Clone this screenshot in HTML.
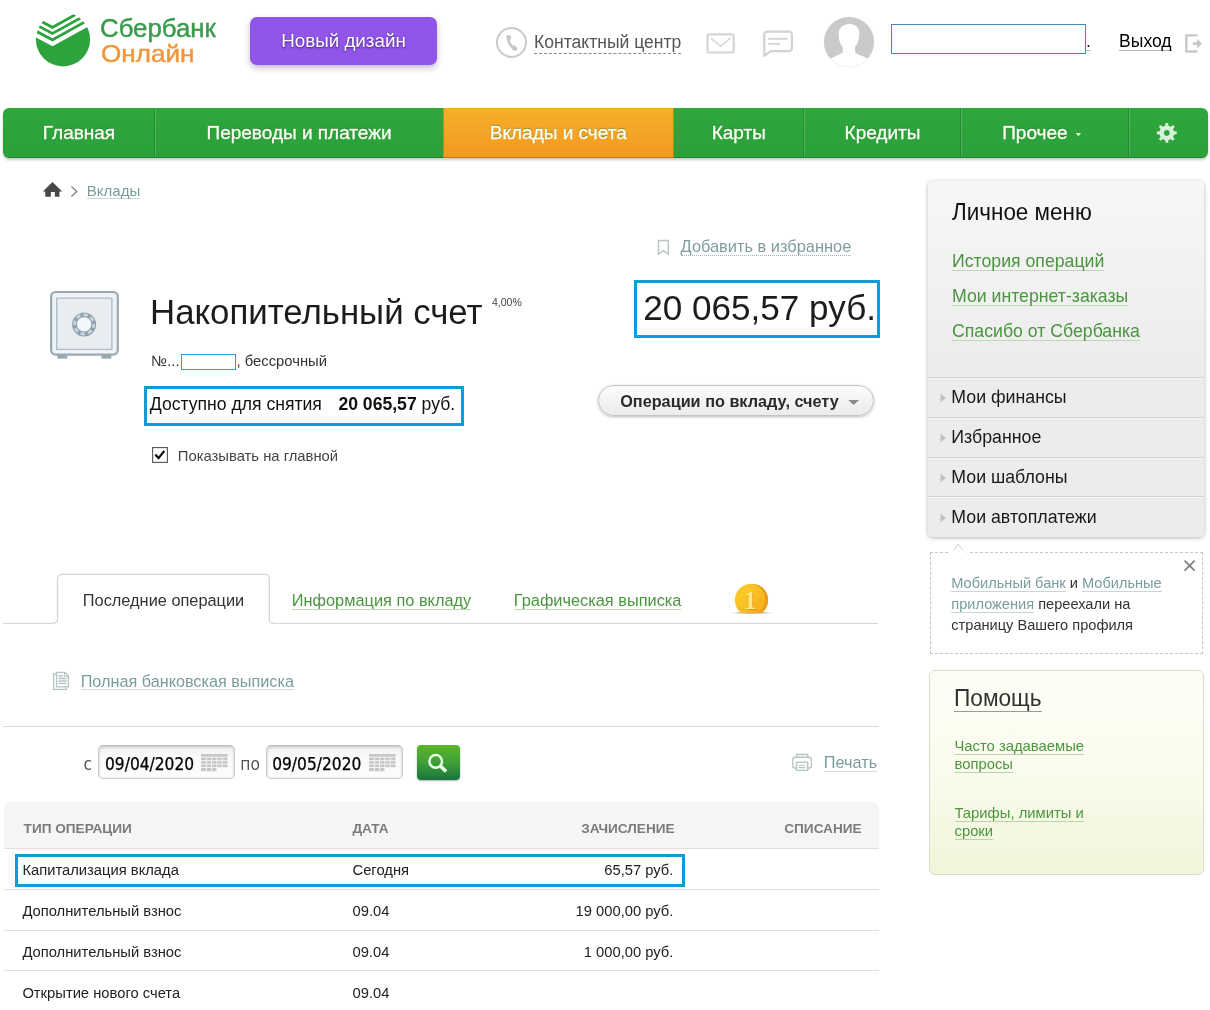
<!DOCTYPE html>
<html lang="ru"><head><meta charset="utf-8"><title>Сбербанк Онлайн</title>
<style>
html,body{margin:0;padding:0;background:#fff;}
body{width:1210px;height:1010px;position:relative;overflow:hidden;font-family:"Liberation Sans", sans-serif;}
.t{position:absolute;white-space:nowrap;}
.b{position:absolute;display:block;}
b{font-weight:bold;}
#pg{position:absolute;left:0;top:0;width:1210px;height:1010px;will-change:transform;}
</style></head>
<body>
<div id="pg">
<svg class="b" style="left:30px;top:5px" width="70" height="70" viewBox="30 5 70 70">
<defs><clipPath id="lc"><circle cx="63" cy="39.3" r="27.1"/></clipPath></defs>
<g clip-path="url(#lc)" fill="#2ca33c" stroke="none">
<path d="M20,29 L52.5,46.2 L100,20.1 L100,80 L20,80 Z"/>
<path d="M20,21.1 L52.5,38.3 L100,11.9 L100,15 L52.5,41.4 L20,24.2 Z"/>
<path d="M20,14.8 L52.5,32 L100,5.6 L100,8.7 L52.5,35.1 L20,17.9 Z"/>
<path d="M20,8.6 L52.5,25.8 L100,-0.6 L100,2.5 L52.5,28.9 L20,11.7 Z"/>
</g></svg>
<div class="t" style="top:11.60px;font-size:25px;line-height:32px;color:#3a9a4c;left:100.40px;transform-origin:0 50%;transform:scaleX(1.032);-webkit-text-stroke:0.45px #3a9a4c;">Сбербанк</div>
<div class="t" style="top:37.51px;font-size:24px;line-height:31px;color:#f0963c;left:101.40px;transform-origin:0 50%;transform:scaleX(1.088);-webkit-text-stroke:0.45px #f0963c;">Онлайн</div>
<div class="b" style="left:250px;top:17px;width:187px;height:47.5px;background:#9155e8;border-radius:7px;box-shadow:0 3px 6px rgba(60,30,120,.3);"></div>
<div class="t" style="top:29.01px;font-size:18.8px;line-height:24px;color:#fff;left:43.50px;width:600px;text-align:center;text-shadow:0 1px 2px rgba(30,0,80,.7);">Новый дизайн</div>
<svg class="b" style="left:494px;top:24px" width="36" height="36" viewBox="494 24 36 36">
<circle cx="511.5" cy="42.4" r="14.5" fill="#fff" stroke="#c9c9c9" stroke-width="2"/>
<path d="M508.3,38 Q508.6,44.8 514.2,48.6" fill="none" stroke="#c6c6c6" stroke-width="2.6" stroke-linecap="round"/>
<rect x="506.4" y="35.100" width="4.600" height="4.800" rx="2" fill="#c6c6c6"/>
<ellipse cx="514.4" cy="48.100" rx="3" ry="2.300" transform="rotate(32 514.4 48.100)" fill="#c6c6c6"/>
</svg>
<div class="t" style="top:33.30px;font-size:17.55px;line-height:19.56px;color:#555;left:534.10px;border-bottom:1px dashed #8a8a8a;">Контактный центр</div>
<svg class="b" style="left:704px;top:30px" width="34" height="28" viewBox="704 30 34 28">
<rect x="707.500" y="34.300" width="26.200" height="18.200" rx="2" fill="none" stroke="#d5d5d5" stroke-width="2.200"/>
<path d="M711,38.200 L720.600,46.300 L730.300,38.200" fill="none" stroke="#d5d5d5" stroke-width="1.500"/>
</svg>
<svg class="b" style="left:760px;top:27px" width="36" height="33" viewBox="760 27 36 33">
<path d="M767.300,31.600 h21.600 a3,3 0 0 1 3,3 v13.600 a3,3 0 0 1 -3,3 h-18.200 l-6.400,4.600 v-21.200 a3,3 0 0 1 3,-3 Z" fill="none" stroke="#d2d2d2" stroke-width="2.200" stroke-linejoin="round"/>
<path d="M768.200,38.900 h19.500 M768.200,43.900 h11.800" stroke="#d2d2d2" stroke-width="1.800" fill="none"/>
</svg>
<svg class="b" style="left:820px;top:13px" width="58" height="58" viewBox="820 13 58 58">
<defs><clipPath id="ac"><circle cx="849" cy="42" r="25"/></clipPath></defs>
<circle cx="849" cy="42" r="25.600" fill="#f4f4f4"/>
<circle cx="849" cy="42" r="25" fill="#cacaca"/>
<g clip-path="url(#ac)" fill="#fff">
<path d="M849.5,24 c6,0 9.800,3.800 9.800,9.500 c0,2 -0.300,3.400 -0.700,4.500 c0.600,0.800 0.300,2.300 -0.600,3.200 c-0.400,2.300 -1.500,4.100 -2.900,5.300 l-0.200,5.700 c3,2.300 8,4.000 13.500,6.600 l4,12 h-47 l4,-12 c5.500,-2.400 10.500,-4.300 13.500,-6.600 l-0.400,-5.700 c-1.400,-1.200 -2.300,-3 -2.700,-5.300 c-0.900,-0.900 -1.200,-2.400 -0.600,-3.200 c-0.400,-1.100 -0.700,-2.500 -0.500,-4.500 c0.300,-5.700 4.200,-9.500 10.800,-9.500 Z"/>
</g></svg>
<div class="b" style="left:891px;top:24px;width:195px;height:30px;border:1px solid #3f8fb2;box-sizing:border-box;background:#fff;"></div>
<div class="t" style="top:34.40px;font-size:17.6px;line-height:15.6px;color:#222;left:1086.00px;border-bottom:1px solid #bcbcbc;">.</div>
<div class="t" style="top:34.41px;font-size:17.55px;line-height:15.56px;color:#000;left:1119.10px;border-bottom:1px solid #b4b4b4;">Выход</div>
<svg class="b" style="left:1182px;top:31px" width="24" height="26" viewBox="1182 31 24 26">
<path d="M1197.500,35.400 h-11.200 v16.100 h11.200" fill="none" stroke="#c8c8c8" stroke-width="2.400"/>
<path d="M1192.900,42.200 h4.200 v-3.400 l5,4.850 l-5,4.850 v-3.400 h-4.200 Z" fill="#c5c5c5"/>
</svg>
<div class="b" style="left:3px;top:108px;width:1204.5px;height:49.80000000000001px;background:linear-gradient(#2ea73d,#2aa03a);border-radius:6px;box-shadow:0 2px 3px rgba(0,0,0,.22);overflow:hidden;"><div class="b" style="left:440.200px;top:0;width:230.400px;height:50px;background:linear-gradient(#f5b02b,#f3981f);"></div><div class="b" style="left:0;top:48.800px;width:1210px;height:1px;background:rgba(0,40,0,.25);"></div></div>
<div class="b" style="left:154px;top:108px;width:1px;height:49px;background:rgba(0,60,10,.22);"></div>
<div class="b" style="left:155px;top:108px;width:1px;height:49px;background:rgba(255,255,255,.17);"></div>
<div class="b" style="left:803px;top:108px;width:1px;height:49px;background:rgba(0,60,10,.22);"></div>
<div class="b" style="left:804px;top:108px;width:1px;height:49px;background:rgba(255,255,255,.17);"></div>
<div class="b" style="left:960px;top:108px;width:1px;height:49px;background:rgba(0,60,10,.22);"></div>
<div class="b" style="left:961px;top:108px;width:1px;height:49px;background:rgba(255,255,255,.17);"></div>
<div class="b" style="left:1128px;top:108px;width:1px;height:49px;background:rgba(0,60,10,.22);"></div>
<div class="b" style="left:1129px;top:108px;width:1px;height:49px;background:rgba(255,255,255,.17);"></div>
<div class="b" style="left:442.5px;top:108px;width:0.8000000000000114px;height:49px;background:rgba(40,90,0,.55);"></div>
<div class="b" style="left:443.3px;top:108px;width:1.0px;height:49px;background:rgba(255,240,120,.25);"></div>
<div class="b" style="left:673.3px;top:108px;width:1.0px;height:49px;background:rgba(40,90,0,.3);"></div>
<div class="t" style="top:120.30px;font-size:19px;line-height:25px;color:#fbfff2;left:-221.00px;width:600px;text-align:center;text-shadow:0 -1px 1px rgba(0,60,0,.5);-webkit-text-stroke:0.35px #fbfff2;">Главная</div>
<div class="t" style="top:120.30px;font-size:19px;line-height:25px;color:#fbfff2;left:-1.00px;width:600px;text-align:center;text-shadow:0 -1px 1px rgba(0,60,0,.5);-webkit-text-stroke:0.35px #fbfff2;">Переводы и платежи</div>
<div class="t" style="top:120.30px;font-size:19px;line-height:25px;color:#fbfff2;left:258.30px;width:600px;text-align:center;text-shadow:0 -1px 1px rgba(0,60,0,.5);-webkit-text-stroke:0.35px #fbfff2;">Вклады и счета</div>
<div class="t" style="top:120.30px;font-size:19px;line-height:25px;color:#fbfff2;left:438.80px;width:600px;text-align:center;text-shadow:0 -1px 1px rgba(0,60,0,.5);-webkit-text-stroke:0.35px #fbfff2;">Карты</div>
<div class="t" style="top:120.30px;font-size:19px;line-height:25px;color:#fbfff2;left:582.50px;width:600px;text-align:center;text-shadow:0 -1px 1px rgba(0,60,0,.5);-webkit-text-stroke:0.35px #fbfff2;">Кредиты</div>
<div class="t" style="top:120.30px;font-size:19px;line-height:25px;color:#fbfff2;left:1002.20px;text-shadow:0 -1px 1px rgba(0,60,0,.5);-webkit-text-stroke:0.35px #fbfff2;">Прочее</div>
<svg class="b" style="left:1075px;top:132px" width="8" height="6"><path d="M0.700,1 h5.400 l-2.700,3.200 Z" fill="#eaf7e0"/></svg>
<svg class="b" style="left:1150px;top:118px" width="34" height="30" viewBox="1150 118 34 30"><path d="M1165.47,122.99 L1168.13,122.99 L1168.36,125.67 L1170.81,126.68 L1172.87,124.95 L1174.75,126.83 L1173.02,128.89 L1174.03,131.34 L1176.71,131.57 L1176.71,134.23 L1174.03,134.46 L1173.02,136.91 L1174.75,138.97 L1172.87,140.85 L1170.81,139.12 L1168.36,140.13 L1168.13,142.81 L1165.47,142.81 L1165.24,140.13 L1162.79,139.12 L1160.73,140.85 L1158.85,138.97 L1160.58,136.91 L1159.57,134.46 L1156.89,134.23 L1156.89,131.57 L1159.57,131.34 L1160.58,128.89 L1158.85,126.83 L1160.73,124.95 L1162.79,126.68 L1165.24,125.67 Z M1169.60,132.90 a2.8,2.8 0 1 0 -5.6,0 a2.8,2.8 0 1 0 5.6,0 Z" fill="#d9f3da" fill-rule="evenodd"/></svg>
<svg class="b" style="left:40px;top:180px" width="40" height="20" viewBox="40 180 40 20">
<path d="M52.450,182.100 l9.700,9.500 h-2.700 v5.200 h-4.600 v-4.700 h-4 v4.700 h-5.600 v-5.200 h-2.400 Z" fill="#474747"/>
<path d="M71.400,186.400 l5.400,5.100 l-5.400,5.100" fill="none" stroke="#6f6f6f" stroke-width="1.100"/>
</svg>
<div class="t" style="top:182.60px;font-size:15px;line-height:15.2px;color:#7a9c9c;left:86.80px;border-bottom:1px solid #c8d6d6;">Вклады</div>
<svg class="b" style="left:655px;top:237px" width="18" height="22" viewBox="655 237 18 22">
<path d="M658.5,240.400 h9.800 v13.600 l-4.900,-3.400 l-4.900,3.400 Z" fill="none" stroke="#b9c7c7" stroke-width="1.500"/></svg>
<div class="t" style="top:237.70px;font-size:16.4px;line-height:17.77px;color:#809c9c;left:680.60px;border-bottom:1px dotted #9db3b3;">Добавить в избранное</div>
<svg class="b" style="left:46px;top:288px" width="78" height="74" viewBox="46 288 78 74">
<rect x="57.400" y="354" width="9.800" height="4.600" fill="#98a8b2"/>
<rect x="101.500" y="354" width="9.800" height="4.600" fill="#98a8b2"/>
<rect x="51.100" y="292" width="66.700" height="62.600" rx="4.500" fill="#eff3f6" stroke="#98a9b4" stroke-width="2.200"/>
<rect x="56.700" y="298.100" width="55.200" height="51.300" rx="0.500" fill="#e9edf1" stroke="#adbdc8" stroke-width="1.400"/>
<circle cx="84.100" cy="324.400" r="9.600" fill="#f4f7f9" stroke="#8fa1ac" stroke-width="4.800"/>
<circle cx="84.100" cy="324.400" r="9.600" fill="none" stroke="#c9d4db" stroke-width="2.800" stroke-dasharray="4.500 3.040" stroke-dashoffset="1"/>
</svg>
<div class="t" style="top:289.00px;font-size:34.8px;line-height:45px;color:#1c1c1c;left:150.00px;">Накопительный счет</div>
<div class="t" style="top:295.41px;font-size:10.5px;line-height:14px;color:#444;left:492.00px;">4,00%</div>
<div class="t" style="top:352.21px;font-size:14.8px;line-height:19px;color:#333;left:151.30px;">№...</div>
<div class="b" style="left:181.3px;top:353.6px;width:54.5px;height:16.099999999999966px;border:1px solid #2e9fd0;box-sizing:border-box;background:#fff;"></div>
<div class="t" style="top:352.21px;font-size:14.8px;line-height:19px;color:#333;left:236.50px;">, бессрочный</div>
<div class="b" style="left:634px;top:280px;width:246px;height:58px;border:3px solid #119bd8;box-sizing:border-box;background:#fff;"></div>
<div class="t" style="top:285.01px;font-size:35.1px;line-height:46px;color:#1c1c1c;left:643.30px;">20 065,57 руб.</div>
<div class="b" style="left:144px;top:386px;width:320px;height:40px;border:3px solid #119bd8;box-sizing:border-box;background:#fff;"></div>
<div class="t" style="top:393.31px;font-size:17.6px;line-height:23px;color:#111;left:149.80px;">Доступно для снятия</div>
<div class="t" style="top:393.31px;font-size:17.6px;line-height:23px;color:#111;left:338.40px;"><b>20 065,57</b> руб.</div>
<svg class="b" style="left:150px;top:445px" width="20" height="20" viewBox="150 445 20 20">
<rect x="152.600" y="447.600" width="14.800" height="14.800" fill="#fff" stroke="#555" stroke-width="1.100"/>
<path d="M155.300,454.600 l3.300,3.500 l5.700,-7.200" fill="none" stroke="#111" stroke-width="2.300"/></svg>
<div class="t" style="top:446.90px;font-size:14.8px;line-height:19px;color:#444;left:177.80px;">Показывать на главной</div>
<div class="b" style="left:598px;top:384.5px;width:276px;height:31.0px;border:1px solid #c4c4c4;box-sizing:border-box;border-radius:16px;background:linear-gradient(#fcfcfc,#ebebeb);box-shadow:0 1px 3px rgba(0,0,0,.28);"></div>
<div class="t" style="top:391.01px;font-size:16.25px;line-height:21px;color:#2a2a2a;font-weight:bold;left:620.20px;">Операции по вкладу, счету</div>
<svg class="b" style="left:847px;top:398px" width="14" height="9"><path d="M1.400,2 h10.600 l-5.300,5 Z" fill="#8a8a8a"/></svg>
<div class="b" style="left:928.4px;top:181.3px;width:276.0000000000001px;height:355.49999999999994px;border-radius:5px;background:linear-gradient(#f7f7f7 0px,#ececec 190px);box-shadow:0 1px 4px rgba(0,0,0,.3);"></div>
<div class="t" style="top:196.00px;font-size:23.9px;line-height:31px;color:#111;left:952.00px;transform-origin:0 50%;transform:scaleX(0.94);">Личное меню</div>
<div class="t" style="top:252.81px;font-size:17.7px;line-height:16.87px;color:#4b9440;left:952.00px;border-bottom:1px solid #c0d7b5;">История операций</div>
<div class="t" style="top:287.86px;font-size:17.7px;line-height:16.87px;color:#4b9440;left:952.00px;border-bottom:1px solid #c0d7b5;">Мои интернет-заказы</div>
<div class="t" style="top:322.90px;font-size:17.7px;line-height:16.87px;color:#4b9440;left:952.00px;border-bottom:1px solid #c0d7b5;">Спасибо от Сбербанка</div>
<div class="b" style="left:928.4px;top:377.0px;width:276.0000000000001px;height:1.0px;background:#d4d4d4;"></div>
<div class="b" style="left:928.4px;top:378.0px;width:276.0000000000001px;height:1.0px;background:#f9f9f9;"></div>
<div class="t" style="top:385.81px;font-size:17.75px;line-height:23px;color:#1a1a1a;left:951.30px;">Мои финансы</div>
<svg class="b" style="left:940px;top:393.40px" width="7" height="10"><path d="M0.500,0.300 l5.200,4.700 l-5.200,4.700 Z" fill="#c2c2c2"/></svg>
<div class="b" style="left:928.4px;top:416.8px;width:276.0000000000001px;height:1.0px;background:#d4d4d4;"></div>
<div class="b" style="left:928.4px;top:417.8px;width:276.0000000000001px;height:1.0px;background:#f9f9f9;"></div>
<div class="t" style="top:425.76px;font-size:17.75px;line-height:23px;color:#1a1a1a;left:951.30px;">Избранное</div>
<svg class="b" style="left:940px;top:433.35px" width="7" height="10"><path d="M0.500,0.300 l5.200,4.700 l-5.200,4.700 Z" fill="#c2c2c2"/></svg>
<div class="b" style="left:928.4px;top:456.6px;width:276.0000000000001px;height:1.0px;background:#d4d4d4;"></div>
<div class="b" style="left:928.4px;top:457.6px;width:276.0000000000001px;height:1.0px;background:#f9f9f9;"></div>
<div class="t" style="top:465.70px;font-size:17.75px;line-height:23px;color:#1a1a1a;left:951.30px;">Мои шаблоны</div>
<svg class="b" style="left:940px;top:473.30px" width="7" height="10"><path d="M0.500,0.300 l5.200,4.700 l-5.200,4.700 Z" fill="#c2c2c2"/></svg>
<div class="b" style="left:928.4px;top:496.4px;width:276.0000000000001px;height:1.0px;background:#d4d4d4;"></div>
<div class="b" style="left:928.4px;top:497.4px;width:276.0000000000001px;height:1.0px;background:#f9f9f9;"></div>
<div class="t" style="top:505.65px;font-size:17.75px;line-height:23px;color:#1a1a1a;left:951.30px;">Мои автоплатежи</div>
<svg class="b" style="left:940px;top:513.25px" width="7" height="10"><path d="M0.500,0.300 l5.200,4.700 l-5.200,4.700 Z" fill="#c2c2c2"/></svg>
<div class="b" style="left:930px;top:552.4px;width:273.4000000000001px;height:102.10000000000002px;border:1px dashed #c6c6c6;box-sizing:border-box;"></div>
<svg class="b" style="left:946px;top:541px" width="26" height="14" viewBox="946 541 26 14">
<rect x="949.500" y="551" width="18" height="3" fill="#fff"/>
<path d="M954,550.300 l4.300,-6.200 l4.300,6.200" fill="none" stroke="#cdcdcd" stroke-width="1"/></svg>
<svg class="b" style="left:1183px;top:559px" width="14" height="14"><path d="M1.600,1.600 l10,10 M11.600,1.600 l-10,10" stroke="#7b7b7b" stroke-width="1.600" fill="none"/></svg>
<div class="t" style="left:951.3px;top:573.1px;width:240px;font-size:14.6px;line-height:20.85px;color:#333;white-space:normal;"><span style="color:#7a9c9c;border-bottom:1px solid #c7d6d6;">Мобильный банк</span> и <span style="color:#7a9c9c;border-bottom:1px solid #c7d6d6;">Мобильные</span><br><span style="color:#7a9c9c;border-bottom:1px solid #c7d6d6;">приложения</span> переехали на<br>страницу Вашего профиля</div>
<div class="b" style="left:929px;top:670.2px;width:275px;height:204.39999999999998px;border:1px solid #dcdccd;box-sizing:border-box;border-radius:6px;background:linear-gradient(#fefef7 0%,#fbfcee 45%,#eff6da 100%);"></div>
<div class="t" style="top:686.31px;font-size:23px;line-height:24.74px;color:#333;left:954.30px;transform-origin:0 50%;transform:scaleX(0.986);border-bottom:1px solid #9a9a9a;">Помощь</div>
<div class="t" style="left:954.5px;top:737.3px;font-size:14.8px;line-height:18px;color:#4b9440;"><span style="border-bottom:1px solid #b9d3ae;">Часто задаваемые</span><br><span style="border-bottom:1px solid #b9d3ae;">вопросы</span></div>
<div class="t" style="left:954.5px;top:803.7px;font-size:14.8px;line-height:18px;color:#4b9440;"><span style="border-bottom:1px solid #b9d3ae;">Тарифы, лимиты и</span><br><span style="border-bottom:1px solid #b9d3ae;">сроки</span></div>
<div class="b" style="left:3px;top:622.6px;width:875px;height:1.0px;background:#d6d6d6;"></div>
<svg class="b" style="left:48px;top:568px" width="232" height="60" viewBox="48 568 232 60">
<path d="M51.0,623.1 h3 a3.5,3.5 0 0 0 3.5,-3.5 v-40.70 a4.5,4.5 0 0 1 4.5,-4.5 h202.90 a4.5,4.5 0 0 1 4.5,4.5 v40.70 a3.5,3.5 0 0 0 3.5,3.5 h3 v3 h-224.90 Z" fill="#fff" stroke="none"/>
<path d="M51.0,623.1 h3 a3.5,3.5 0 0 0 3.5,-3.5 v-40.70 a4.5,4.5 0 0 1 4.5,-4.5 h202.90 a4.5,4.5 0 0 1 4.5,4.5 v40.70 a3.5,3.5 0 0 0 3.5,3.5 h3" fill="none" stroke="#d3d3d3" stroke-width="1.2"/>
</svg>
<div class="t" style="top:590.30px;font-size:16.35px;line-height:21px;color:#333;left:82.80px;">Последние операции</div>
<div class="t" style="top:593.30px;font-size:16.35px;line-height:15.33px;color:#4b9440;left:291.80px;border-bottom:1px solid #c0d6b7;">Информация по вкладу</div>
<div class="t" style="top:593.30px;font-size:16.35px;line-height:15.33px;color:#4b9440;left:513.80px;border-bottom:1px solid #c0d6b7;">Графическая выписка</div>
<svg class="b" style="left:725px;top:580px" width="54" height="36" viewBox="725 580 54 36">
<defs><clipPath id="cc"><rect x="725" y="580" width="54" height="32.800"/></clipPath>
<linearGradient id="cg" x1="0" y1="0" x2="1" y2="1"><stop offset="0" stop-color="#fcd22e"/><stop offset="0.55" stop-color="#f9bd24"/><stop offset="1" stop-color="#f5a11b"/></linearGradient>
<radialGradient id="sg"><stop offset="0" stop-color="#a8905f" stop-opacity="1"/><stop offset="0.6" stop-color="#b9a37a" stop-opacity=".6"/><stop offset="1" stop-color="#b9a37a" stop-opacity="0"/></radialGradient></defs>
<ellipse cx="752" cy="612.900" rx="24" ry="1.100" fill="url(#sg)"/>
<g clip-path="url(#cc)">
<ellipse cx="752.800" cy="600" rx="15.400" ry="16" fill="#e89c18"/>
<ellipse cx="750.100" cy="600" rx="15.300" ry="16" fill="url(#cg)"/>
<ellipse cx="750.100" cy="600" rx="12.800" ry="13.600" fill="none" stroke="#f7bb22" stroke-width="1"/>
<text x="751.300" y="609.600" font-family="Liberation Serif, serif" font-weight="bold" font-size="25" text-anchor="middle" fill="#e59812">1</text>
<text x="750.300" y="608.700" font-family="Liberation Serif, serif" font-weight="bold" font-size="25" text-anchor="middle" fill="#fde88c">1</text>
</g></svg>
<svg class="b" style="left:50px;top:669px" width="22" height="24" viewBox="50 669 22 24">
<path d="M55.900,674 h-2.300 v15.400 h12.700 v-1.900" fill="none" stroke="#b4c3c3" stroke-width="1.300"/>
<path d="M56.500,672.300 h8.300 l3.600,3.600 v11 h-11.900 Z" fill="#fbfdfd" stroke="#b4c3c3" stroke-width="1.300" stroke-linejoin="round"/>
<path d="M64.600,672.500 v3.700 h3.700" fill="none" stroke="#b4c3c3" stroke-width="1.100"/>
<path d="M58.500,676 h4.300 M58.500,678.500 h8 M58.500,681 h8 M58.500,683.400 h8" stroke="#b4c3c3" stroke-width="1.300"/>
</svg>
<div class="t" style="top:673.20px;font-size:16.23px;line-height:16.05px;color:#7a9c9c;left:80.70px;border-bottom:1px solid #d3dddd;">Полная банковская выписка</div>
<div class="b" style="left:3px;top:725.7px;width:876px;height:1.0px;background:#d9d9d9;"></div>
<div class="t" style="top:752.51px;font-size:17.2px;line-height:22px;color:#555;left:83.50px;font-family:'DejaVu Sans Condensed','DejaVu Sans',sans-serif;">с</div>
<div class="t" style="top:752.51px;font-size:17.2px;line-height:22px;color:#555;left:240.30px;font-family:'DejaVu Sans Condensed','DejaVu Sans',sans-serif;">по</div>
<div class="b" style="left:98.4px;top:745px;width:136.2px;height:34.299999999999955px;border:1px solid #cbcbcb;border-top-color:#bdbdbd;box-sizing:border-box;border-radius:5px;background:linear-gradient(#f1f1f1,#fafafa 35%,#fdfdfd);box-shadow:inset 0 1px 3px rgba(0,0,0,.2);"></div>
<div class="t" style="top:752.51px;font-size:17.2px;line-height:22px;color:#000;left:105.00px;font-family:'DejaVu Sans Condensed','DejaVu Sans',sans-serif;-webkit-text-stroke:0.25px #000;">09/04/2020</div>
<svg class="b" style="left:201.2px;top:754px" width="28" height="19" viewBox="0 0 28 19"><defs><clipPath id="calc"><path d="M0,0 h26.700 v13.400 h-10.900 v4 h-15.800 Z"/></clipPath></defs><g clip-path="url(#calc)"><path d="M0,0 h26.700 v13.400 h-10.900 v4 h-15.800 Z" fill="#c7c7c7"/><rect x="4.8" y="3.200" width="1" height="15" fill="#f3f3f3"/><rect x="10.1" y="3.200" width="1" height="15" fill="#f3f3f3"/><rect x="15.4" y="3.200" width="1" height="15" fill="#f3f3f3"/><rect x="20.7" y="3.200" width="1" height="15" fill="#f3f3f3"/><rect x="0" y="2.7" width="27" height="1" fill="#f3f3f3"/><rect x="0" y="6.2" width="27" height="1" fill="#f3f3f3"/><rect x="0" y="9.6" width="27" height="1" fill="#f3f3f3"/><rect x="0" y="13.0" width="27" height="1" fill="#f3f3f3"/></g></svg>
<div class="b" style="left:265.5px;top:745px;width:137.10000000000002px;height:34.299999999999955px;border:1px solid #cbcbcb;border-top-color:#bdbdbd;box-sizing:border-box;border-radius:5px;background:linear-gradient(#f1f1f1,#fafafa 35%,#fdfdfd);box-shadow:inset 0 1px 3px rgba(0,0,0,.2);"></div>
<div class="t" style="top:752.51px;font-size:17.2px;line-height:22px;color:#000;left:272.20px;font-family:'DejaVu Sans Condensed','DejaVu Sans',sans-serif;-webkit-text-stroke:0.25px #000;">09/05/2020</div>
<svg class="b" style="left:368.7px;top:754px" width="28" height="19" viewBox="0 0 28 19"><defs><clipPath id="calc"><path d="M0,0 h26.700 v13.400 h-10.900 v4 h-15.800 Z"/></clipPath></defs><g clip-path="url(#calc)"><path d="M0,0 h26.700 v13.400 h-10.900 v4 h-15.800 Z" fill="#c7c7c7"/><rect x="4.8" y="3.200" width="1" height="15" fill="#f3f3f3"/><rect x="10.1" y="3.200" width="1" height="15" fill="#f3f3f3"/><rect x="15.4" y="3.200" width="1" height="15" fill="#f3f3f3"/><rect x="20.7" y="3.200" width="1" height="15" fill="#f3f3f3"/><rect x="0" y="2.7" width="27" height="1" fill="#f3f3f3"/><rect x="0" y="6.2" width="27" height="1" fill="#f3f3f3"/><rect x="0" y="9.6" width="27" height="1" fill="#f3f3f3"/><rect x="0" y="13.0" width="27" height="1" fill="#f3f3f3"/></g></svg>
<div class="b" style="left:416.5px;top:745.2px;width:43.80000000000001px;height:34.799999999999955px;border-radius:4px;background:linear-gradient(#5db62c,#3f9f38 50%,#17753e);box-shadow:0 1px 2px rgba(0,0,0,.3);"></div>
<svg class="b" style="left:424px;top:750px" width="28" height="26" viewBox="424 750 28 26">
<circle cx="435.700" cy="761.400" r="6.300" fill="none" stroke="#e6ffe2" stroke-width="2.500"/>
<path d="M440.400,766 l5.700,5.500" stroke="#e6ffe2" stroke-width="3.600" stroke-linecap="butt" fill="none"/></svg>
<svg class="b" style="left:790px;top:752px" width="24" height="21" viewBox="790 752 24 21">
<path d="M796.500,757.300 v-2.800 h11.200 v2.800" fill="none" stroke="#b7c5c5" stroke-width="1.400"/>
<path d="M796.300,768 h-1.500 a2,2 0 0 1 -2,-2 v-6.500 a2.200,2.200 0 0 1 2.200,-2.200 h14.200 a2.200,2.200 0 0 1 2.200,2.200 v6.500 a2,2 0 0 1 -2,2 h-1.500" fill="none" stroke="#b7c5c5" stroke-width="1.400"/>
<rect x="796.500" y="762.300" width="11.200" height="8" fill="#fff" stroke="#b7c5c5" stroke-width="1.400"/>
<path d="M798.800,765.200 h6.600 M798.800,767.600 h6.600" stroke="#b7c5c5" stroke-width="1.100"/>
</svg>
<div class="t" style="top:752.61px;font-size:16.3px;line-height:18.1px;color:#7a9c9c;left:823.80px;border-bottom:1px solid #d0dcdc;">Печать</div>
<div class="b" style="left:3.7px;top:802.4px;width:875.0999999999999px;height:45.80000000000007px;background:#f5f5f5;border-radius:7px 7px 0 0;"></div>
<div class="b" style="left:3.7px;top:847.7px;width:875.0999999999999px;height:1.0px;background:#e0e0e0;"></div>
<div class="b" style="left:3.7px;top:888.6px;width:875.0999999999999px;height:1.0px;background:#e0e0e0;"></div>
<div class="b" style="left:3.7px;top:929.5px;width:875.0999999999999px;height:1.0px;background:#e0e0e0;"></div>
<div class="b" style="left:3.7px;top:970.4px;width:875.0999999999999px;height:1.0px;background:#e0e0e0;"></div>
<div class="t" style="top:820.31px;font-size:13.6px;line-height:18px;color:#7b7b7b;font-weight:bold;left:23.60px;">ТИП ОПЕРАЦИИ</div>
<div class="t" style="top:820.31px;font-size:13.6px;line-height:18px;color:#7b7b7b;font-weight:bold;left:352.40px;">ДАТА</div>
<div class="t" style="top:820.31px;font-size:13.6px;line-height:18px;color:#7b7b7b;font-weight:bold;left:74.60px;width:600px;text-align:right;">ЗАЧИСЛЕНИЕ</div>
<div class="t" style="top:820.31px;font-size:13.6px;line-height:18px;color:#7b7b7b;font-weight:bold;left:261.60px;width:600px;text-align:right;">СПИСАНИЕ</div>
<div class="b" style="left:15px;top:854px;width:670px;height:33px;border:3px solid #119bd8;box-sizing:border-box;background:#fff;"></div>
<div class="t" style="top:861.01px;font-size:14.75px;line-height:19px;color:#222;left:22.40px;">Капитализация вклада</div>
<div class="t" style="top:861.01px;font-size:14.75px;line-height:19px;color:#222;left:352.50px;">Сегодня</div>
<div class="t" style="top:861.01px;font-size:14.75px;line-height:19px;color:#222;left:73.40px;width:600px;text-align:right;">65,57 руб.</div>
<div class="t" style="top:901.91px;font-size:14.75px;line-height:19px;color:#222;left:22.40px;">Дополнительный взнос</div>
<div class="t" style="top:901.91px;font-size:14.75px;line-height:19px;color:#222;left:352.50px;">09.04</div>
<div class="t" style="top:901.91px;font-size:14.75px;line-height:19px;color:#222;left:73.40px;width:600px;text-align:right;">19 000,00 руб.</div>
<div class="t" style="top:942.80px;font-size:14.75px;line-height:19px;color:#222;left:22.40px;">Дополнительный взнос</div>
<div class="t" style="top:942.80px;font-size:14.75px;line-height:19px;color:#222;left:352.50px;">09.04</div>
<div class="t" style="top:942.80px;font-size:14.75px;line-height:19px;color:#222;left:73.40px;width:600px;text-align:right;">1 000,00 руб.</div>
<div class="t" style="top:983.71px;font-size:14.75px;line-height:19px;color:#222;left:22.40px;">Открытие нового счета</div>
<div class="t" style="top:983.71px;font-size:14.75px;line-height:19px;color:#222;left:352.50px;">09.04</div>
</div>
</body></html>
